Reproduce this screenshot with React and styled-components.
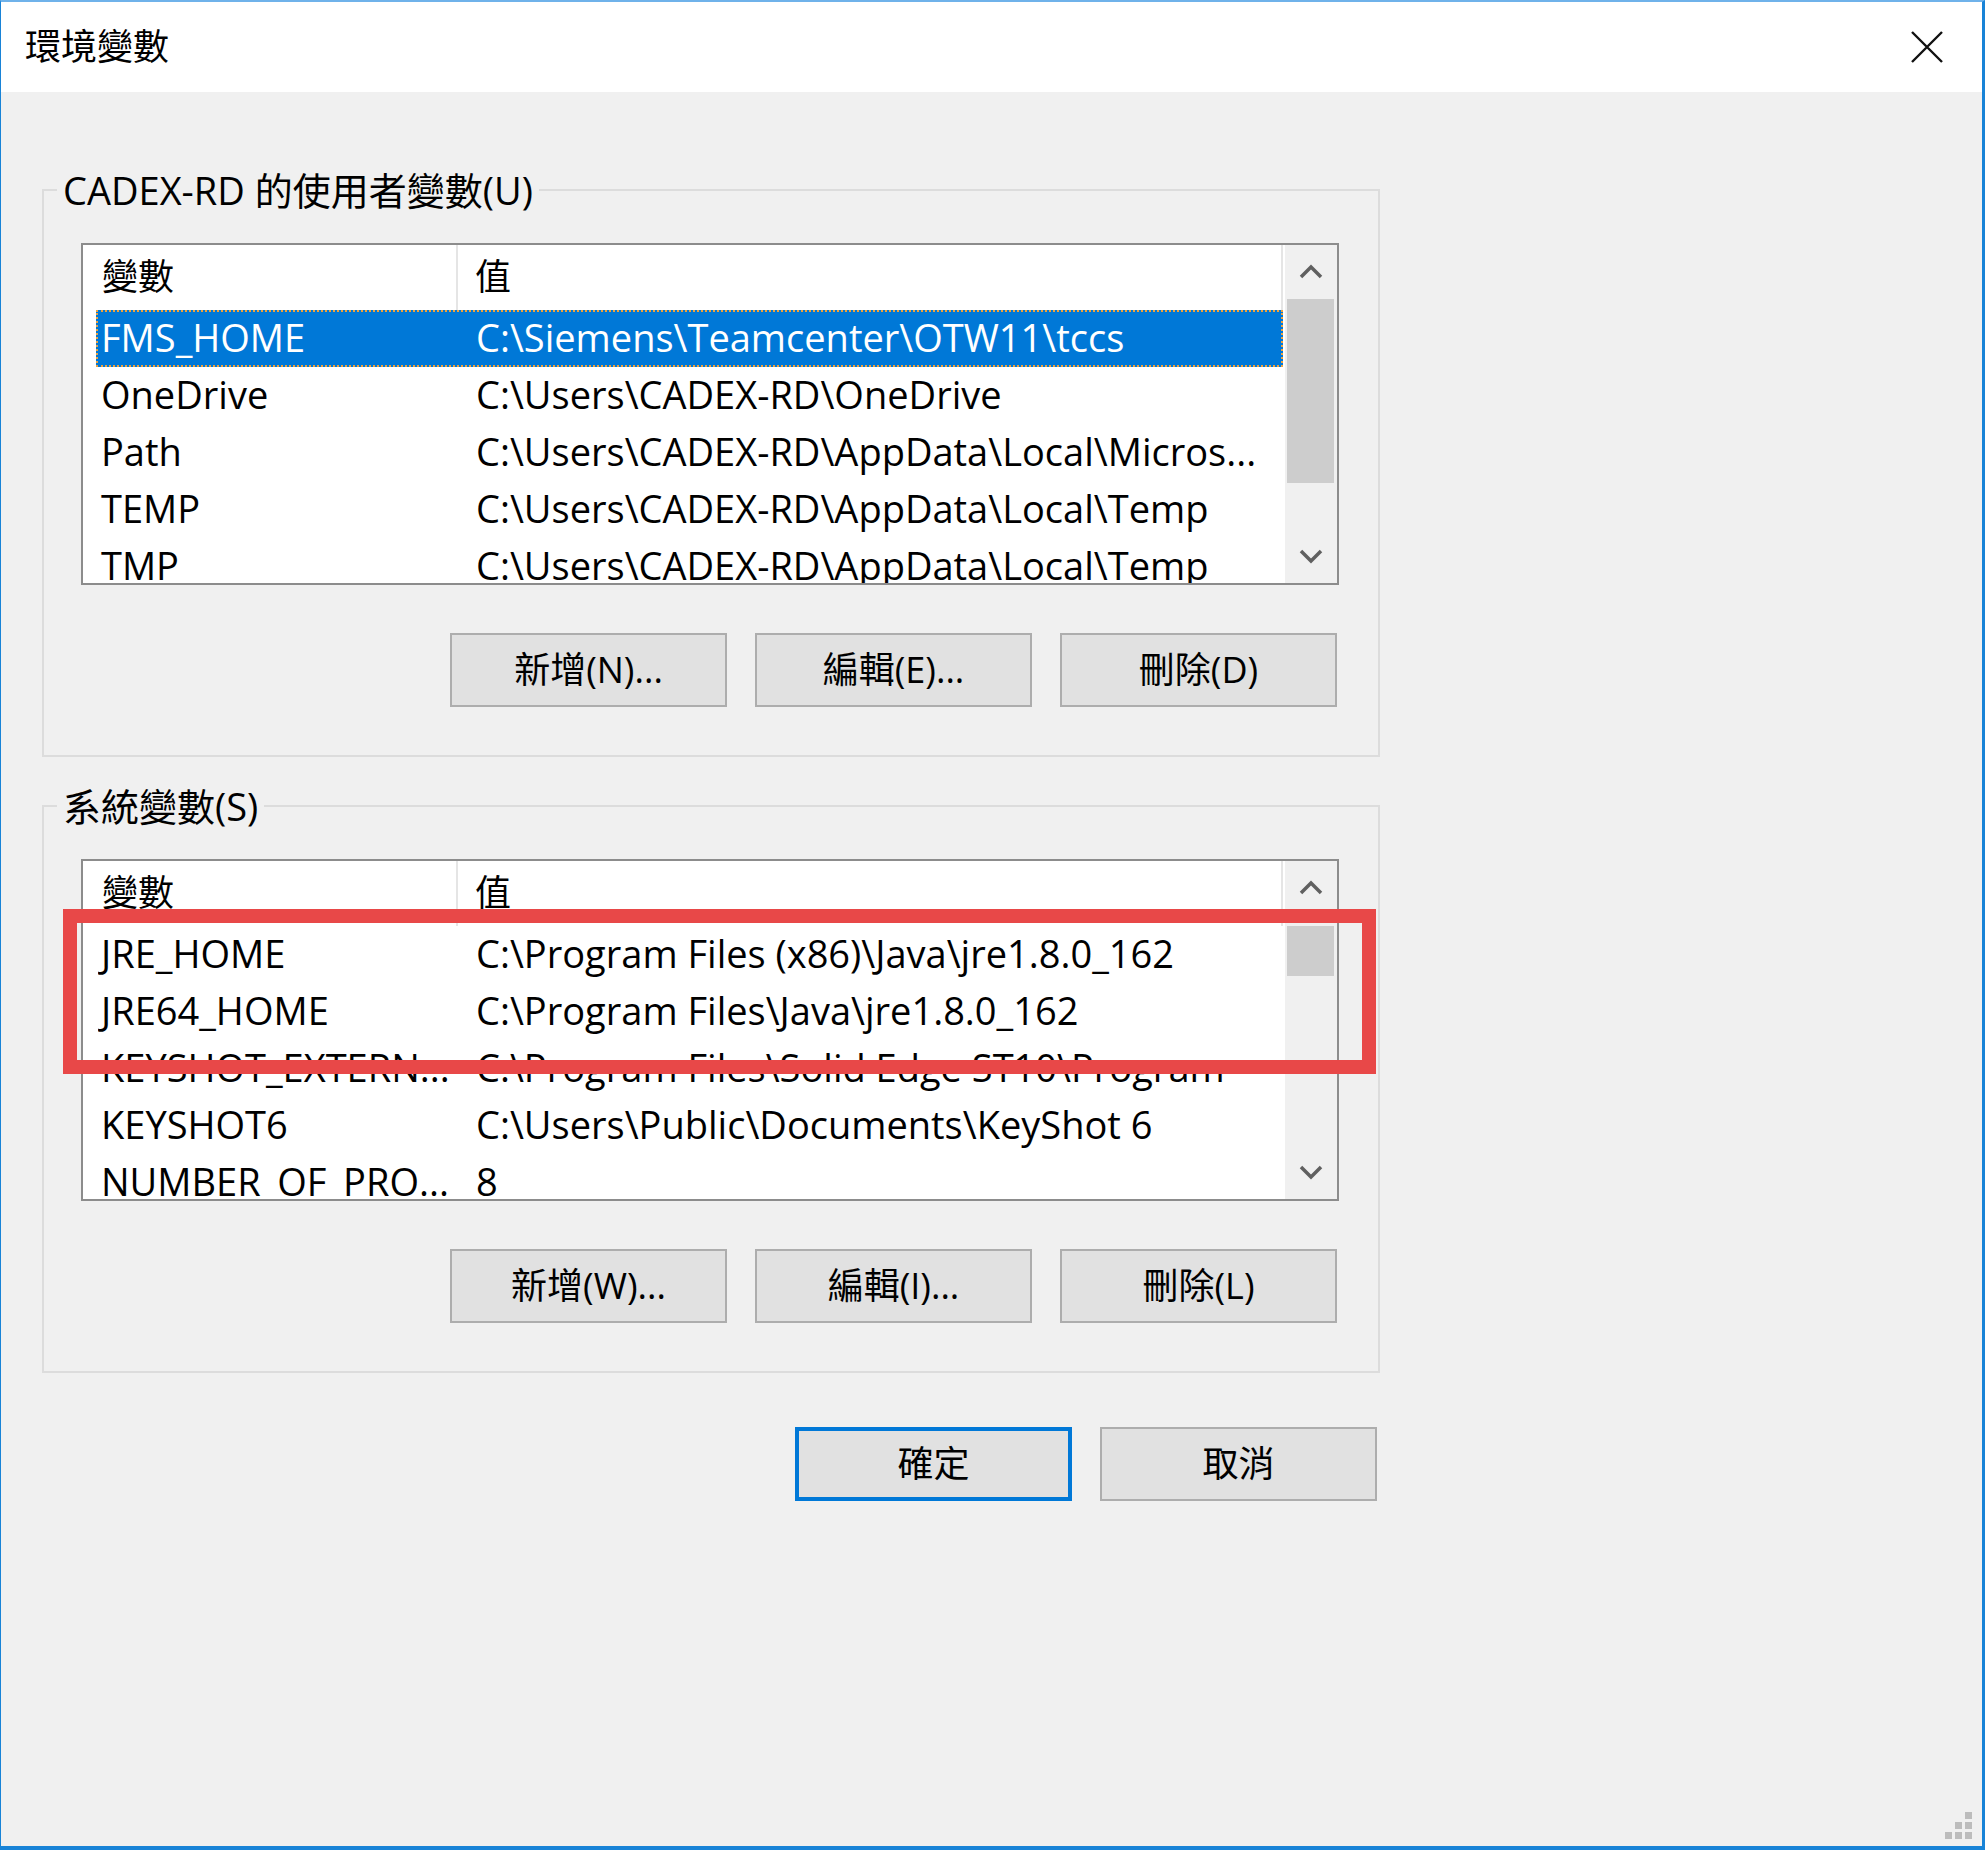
import React from "react";
import styled, { createGlobalStyle } from "styled-components";

const GlobalStyle = createGlobalStyle`
  html, body {
    margin: 0;
    padding: 0;
    background: #f0f0f0;
  }
  body {
    font-family: "Open Sans", "Noto Sans CJK TC", sans-serif;
    color: #000;
  }
`;

const Window = styled.div`
  position: relative;
  box-sizing: border-box;
  width: 1985px;
  height: 1850px;
  background: #f0f0f0;
  border: 1px solid #1883d7;
  border-top: 2px solid #6fb2ea;
  border-right-width: 3px;
  border-bottom-width: 4px;
  display: flex;
  flex-direction: column;
`;

const TitleBar = styled.div`
  height: 90px;
  background: #fff;
  display: flex;
  align-items: center;
  justify-content: space-between;
  padding: 0 39px 0 24px;
`;

const TitleText = styled.div`
  font-size: 36px;
  line-height: 1.3;
`;

const Body = styled.div`
  display: flex;
  flex-direction: column;
  padding-left: 41px;
`;

const Group = styled.fieldset`
  box-sizing: border-box;
  width: 1338px;
  margin: ${(p) => p.$top}px 0 0 0;
  padding: 29px 39px 48px 37px;
  border: 2px solid #dcdcdc;
  min-width: 0;
`;

const Legend = styled.legend`
  font-size: 38px;
  line-height: 48px;
  padding: 0 6px;
  margin-left: -24px;
`;

const ListView = styled.div`
  box-sizing: border-box;
  height: 342px;
  border: 2px solid #8c8c8c;
  background: #fff;
  display: flex;
  overflow: hidden;
`;

const ListContent = styled.div`
  flex: 1;
  min-width: 0;
  padding: 0 2px 0 13px;
  overflow: hidden;
`;

const HeaderRow = styled.div`
  display: flex;
  height: 65px;
`;

const HeaderCell = styled.div`
  box-sizing: border-box;
  width: ${(p) => (p.$width ? `${p.$width}px` : "auto")};
  flex: ${(p) => (p.$width ? "none" : "1")};
  display: flex;
  align-items: center;
  padding-left: ${(p) => p.$pad}px;
  border-right: 2px solid #e5e5e5;
  font-size: 36px;
  line-height: 1.3;
`;

const Row = styled.div`
  box-sizing: border-box;
  display: flex;
  align-items: center;
  height: 57px;
  padding-bottom: 3px;
  background: ${(p) => (p.$selected ? "#0078d7" : "transparent")};
  color: ${(p) => (p.$selected ? "#fff" : "#000")};
  border: 2px ${(p) => (p.$selected ? "dotted #f0a23c" : "solid transparent")};
  font-size: 38px;
  line-height: 50px;
  white-space: nowrap;
`;

const NameCell = styled.div`
  box-sizing: border-box;
  width: 373px;
  flex: none;
  padding-left: 3px;
  overflow: hidden;
`;

const ValueCell = styled.div`
  flex: 1;
  padding-left: 5px;
  overflow: hidden;
`;

const ScrollBar = styled.div`
  width: 52px;
  flex: none;
  background: #f0f0f0;
  display: flex;
  flex-direction: column;
`;

const ArrowBox = styled.div`
  height: 54px;
  flex: none;
  display: flex;
  align-items: center;
  justify-content: center;
`;

const Track = styled.div`
  flex: 1;
  display: flex;
  flex-direction: column;
`;

const Thumb = styled.div`
  margin: ${(p) => p.$offset}px 3px 0 2px;
  height: ${(p) => p.$size}px;
  background: #cdcdcd;
`;

const ButtonRow = styled.div`
  display: flex;
  justify-content: flex-end;
  gap: 28px;
  margin-top: 48px;
  padding-right: 2px;
`;

const Button = styled.button`
  box-sizing: border-box;
  width: 277px;
  height: 74px;
  background: #e1e1e1;
  border: ${(p) => (p.$primary ? "4px solid #0078d7" : "2px solid #adadad")};
  font-family: "Open Sans", "Noto Sans CJK TC", sans-serif;
  font-size: 36px;
  line-height: 1.3;
  color: #000;
  padding: 0;
`;

const Footer = styled.div`
  width: 1338px;
  display: flex;
  justify-content: flex-end;
  gap: 28px;
  margin-top: 54px;
  padding-right: 3px;
  box-sizing: border-box;
`;

// red highlight drawn over the system variable list
const Annotation = styled.div`
  position: absolute;
  left: 62px;
  top: 907px;
  width: 1313px;
  height: 165px;
  box-sizing: border-box;
  border: 14px solid #e84848;
  pointer-events: none;
`;

const Grip = styled.svg`
  position: absolute;
  right: 9px;
  bottom: 6px;
`;

const Chevron = ({ down }) => (
  <svg width="24" height="18" viewBox="0 0 24 18">
    <polyline
      points={down ? "2,4 12,14 22,4" : "2,14 12,4 22,14"}
      fill="none"
      stroke="#606060"
      strokeWidth="3.5"
    />
  </svg>
);

const CloseIcon = () => (
  <svg width="32" height="32" viewBox="0 0 32 32">
    <path d="M1 1 L31 31 M31 1 L1 31" stroke="#111" strokeWidth="2.4" fill="none" />
  </svg>
);

const userVars = [
  ["FMS_HOME", "C:\\Siemens\\Teamcenter\\OTW11\\tccs"],
  ["OneDrive", "C:\\Users\\CADEX-RD\\OneDrive"],
  ["Path", "C:\\Users\\CADEX-RD\\AppData\\Local\\Micros..."],
  ["TEMP", "C:\\Users\\CADEX-RD\\AppData\\Local\\Temp"],
  ["TMP", "C:\\Users\\CADEX-RD\\AppData\\Local\\Temp"],
];

const systemVars = [
  ["JRE_HOME", "C:\\Program Files (x86)\\Java\\jre1.8.0_162"],
  ["JRE64_HOME", "C:\\Program Files\\Java\\jre1.8.0_162"],
  ["KEYSHOT_EXTERN...", "C:\\Program Files\\Solid Edge ST10\\Program"],
  ["KEYSHOT6", "C:\\Users\\Public\\Documents\\KeyShot 6"],
  ["NUMBER_OF_PRO...", "8"],
];

function VarList({ rows, selected, thumbOffset, thumbSize }) {
  return (
    <ListView>
      <ListContent>
        <HeaderRow>
          <HeaderCell $width={362} $pad={6}>變數</HeaderCell>
          <HeaderCell $pad={17}>值</HeaderCell>
        </HeaderRow>
        {rows.map(([name, value], i) => (
          <Row key={name} $selected={i === selected}>
            <NameCell>{name}</NameCell>
            <ValueCell>{value}</ValueCell>
          </Row>
        ))}
      </ListContent>
      <ScrollBar>
        <ArrowBox>
          <Chevron />
        </ArrowBox>
        <Track>
          <Thumb $offset={thumbOffset} $size={thumbSize} />
        </Track>
        <ArrowBox>
          <Chevron down />
        </ArrowBox>
      </ScrollBar>
    </ListView>
  );
}

export default function App() {
  return (
    <>
      <GlobalStyle />
      <Window>
        <TitleBar>
          <TitleText>環境變數</TitleText>
          <CloseIcon />
        </TitleBar>
        <Body>
          <Group $top={74}>
            <Legend>CADEX-RD 的使用者變數(U)</Legend>
            <VarList rows={userVars} selected={0} thumbOffset={0} thumbSize={184} />
            <ButtonRow>
              <Button>新增(N)...</Button>
              <Button>編輯(E)...</Button>
              <Button>刪除(D)</Button>
            </ButtonRow>
          </Group>
          <Group $top={25}>
            <Legend>系統變數(S)</Legend>
            <VarList rows={systemVars} selected={-1} thumbOffset={11} thumbSize={50} />
            <ButtonRow>
              <Button>新增(W)...</Button>
              <Button>編輯(I)...</Button>
              <Button>刪除(L)</Button>
            </ButtonRow>
          </Group>
          <Footer>
            <Button $primary>確定</Button>
            <Button>取消</Button>
          </Footer>
        </Body>
        <Annotation />
        <Grip width="28" height="28" viewBox="0 0 28 28">
          <rect x="20" y="0" width="7" height="7" fill="#bcbcbc" />
          <rect x="10" y="10" width="7" height="7" fill="#bcbcbc" />
          <rect x="20" y="10" width="7" height="7" fill="#bcbcbc" />
          <rect x="0" y="20" width="7" height="7" fill="#bcbcbc" />
          <rect x="10" y="20" width="7" height="7" fill="#bcbcbc" />
          <rect x="20" y="20" width="7" height="7" fill="#bcbcbc" />
        </Grip>
      </Window>
    </>
  );
}
